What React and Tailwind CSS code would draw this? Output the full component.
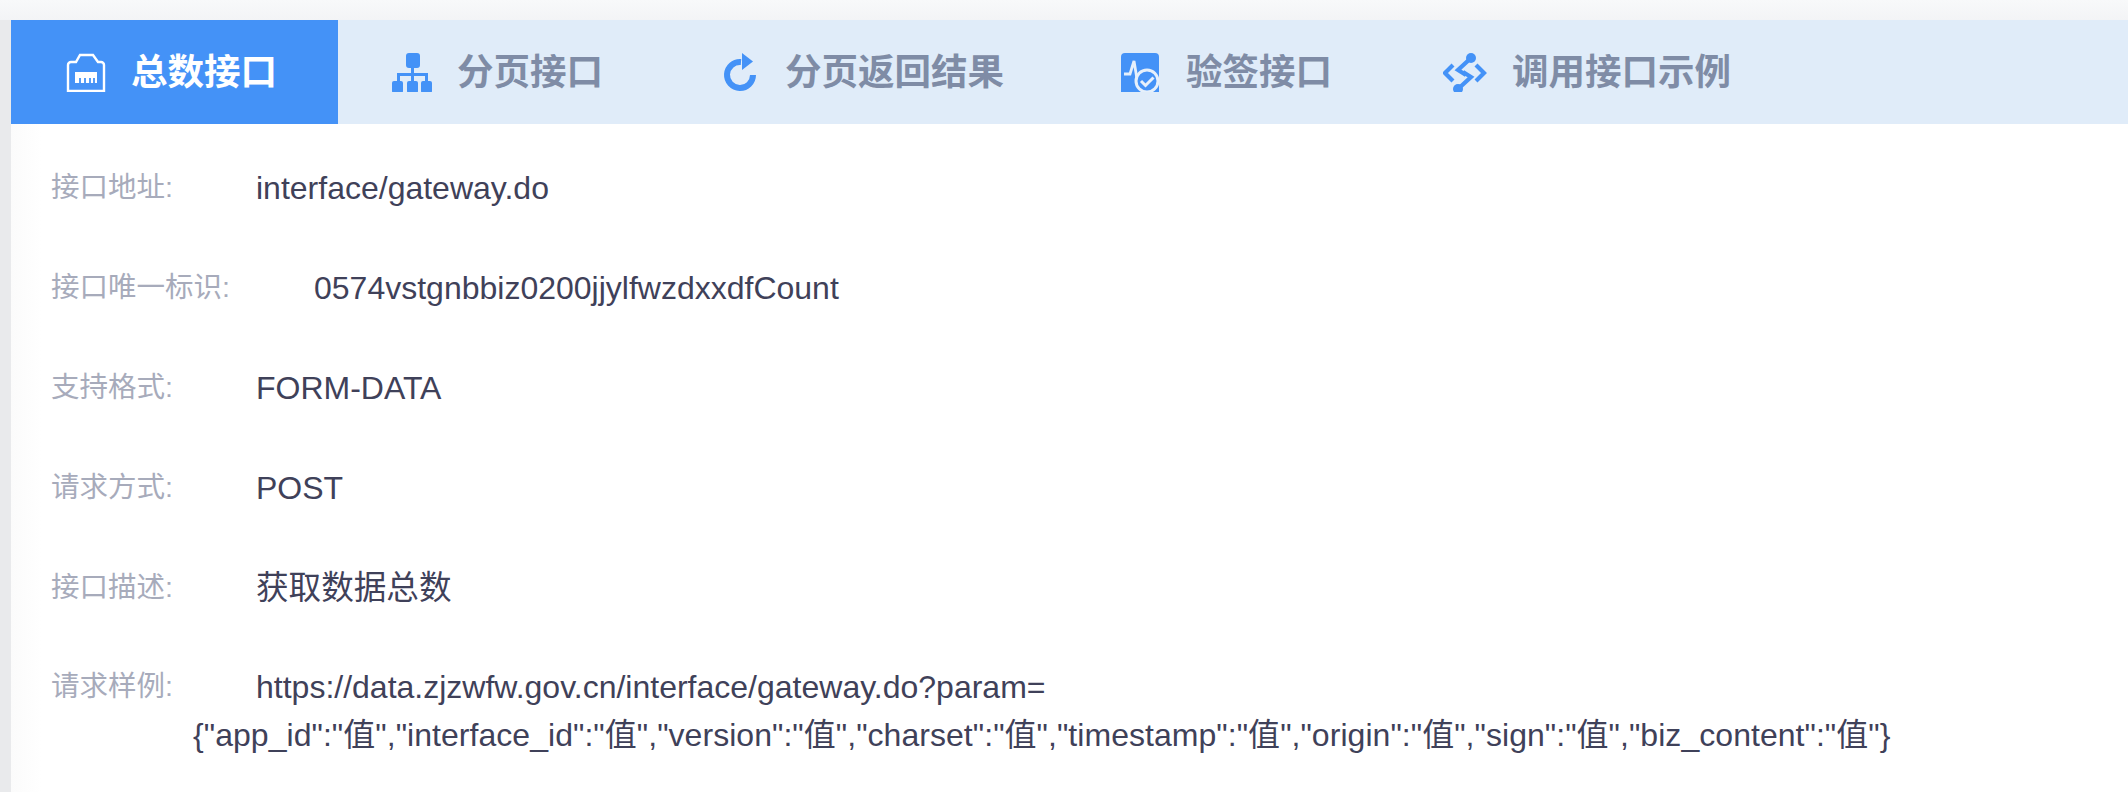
const Rj45Icon = () => (
  <svg viewBox="0 0 40 40" className="w-10 h-10 shrink-0" fill="none" stroke="#fff" strokeWidth="2.4">
    <path d="M2 38V12a3 3 0 0 1 3-3h5l4-7h13l5 7h3a3 3 0 0 1 3 3v26z" />
    <path d="M9 19h22v11H9z" fill="#fff" stroke="none" />
    <path d="M14 25v5M19 25v5M24 25v5M28 25v5" stroke="#4492f7" strokeWidth="1.8" />
  </svg>
);

const TreeIcon = () => (
  <svg viewBox="0 0 40 40" className="w-10 h-10 shrink-0" fill="#4492f7">
    <rect x="14" y="0" width="14" height="15" rx="3" />
    <path d="M19 14h3v6h14v10h-3v-7H22v7h-3v-7H8v7H5V20h14z" />
    <rect x="0" y="28" width="11" height="12" rx="2" />
    <rect x="15" y="28" width="11" height="12" rx="2" />
    <rect x="29" y="28" width="11" height="12" rx="2" />
  </svg>
);

const RefreshIcon = () => (
  <svg viewBox="0 0 38 40" className="w-[38px] h-10 shrink-0" fill="none">
    <path d="M31 22A13 13 0 1 1 19 9" stroke="#4492f7" strokeWidth="6" />
    <path d="M20 0l11 8.5-11 8.5z" fill="#4492f7" />
  </svg>
);

const VerifyIcon = () => (
  <svg viewBox="0 0 40 40" className="w-10 h-10 shrink-0">
    <rect x="0" y="0" width="38" height="42" rx="4" fill="#4492f7" />
    <path d="M3 21h6l4-13 4 24 3-11h4" fill="none" stroke="#e6f0fb" strokeWidth="2.8" />
    <circle cx="26" cy="28" r="11" fill="#4492f7" stroke="#e6f0fb" strokeWidth="3" />
    <path d="M20 28l4.500 4.500 8-8" fill="none" stroke="#e6f0fb" strokeWidth="3" />
  </svg>
);

const LinkIcon = () => (
  <svg viewBox="0 0 44 40" className="w-11 h-10 shrink-0" fill="none" stroke="#4492f7" strokeWidth="4.2">
    <circle cx="28" cy="5" r="5" fill="#4492f7" stroke="none" />
    <circle cx="15" cy="36" r="5" fill="#4492f7" stroke="none" />
    <path d="M28 5L15 17l8 5" />
    <path d="M15 36l13-12-8-5" />
    <path d="M10 12l-8 8 8 8M33 12l8 8-8 8" />
  </svg>
);

const tabs = [
  { label: "总数接口", icon: <Rj45Icon />, active: true, className: "w-[327px] pl-[55px]" },
  { label: "分页接口", icon: <TreeIcon />, className: "w-[329px] pl-[54px]" },
  { label: "分页返回结果", icon: <RefreshIcon />, className: "w-[397px] pl-[55px]" },
  { label: "验签接口", icon: <VerifyIcon />, className: "w-[322px] pl-[57px]" },
  { label: "调用接口示例", icon: <LinkIcon />, className: "pl-[57px]" },
];

const rows = [
  { label: "接口地址:", value: "interface/gateway.do" },
  { label: "接口唯一标识:", value: "0574vstgnbbiz0200jjylfwzdxxdfCount", wide: true },
  { label: "支持格式:", value: "FORM-DATA" },
  { label: "请求方式:", value: "POST" },
  { label: "接口描述:", value: "获取数据总数", cjk: true },
];

const App = () => {
  return (
    <div
      className="w-[2128px] h-[792px] overflow-hidden bg-[#e9eaec]"
      style={{ fontFamily: '"Liberation Sans", "Noto Sans CJK SC", sans-serif' }}
    >
      <div className="h-5 bg-linear-to-b from-[#f8f9fa] to-[#f3f4f6]" />
      <div className="ml-[11px]">
        <div className="flex h-[104px] bg-[#e0ecf9]">
          {tabs.map((tab) => (
            <div
              key={tab.label}
              className={`flex items-start pt-[33px] h-full overflow-hidden ${tab.className} ${tab.active ? "bg-[#4492f7] text-white" : "text-[#7f8ca6]"}`}
            >
              <div className="h-[39px] overflow-hidden">{tab.icon}</div>
              <span className="ml-[25px] text-[36.5px] leading-[40px] font-bold whitespace-nowrap">{tab.label}</span>
            </div>
          ))}
        </div>

        <div className="h-[668px] bg-[linear-gradient(90deg,#fbfbfb,#ffffff_30px)] pl-[40px] text-[32px] text-[#3f4159]">
          {rows.map((row) => (
            <div key={row.label} className="flex h-[100px] items-start pt-[44px]">
              <span className={`text-[28.5px] leading-[38px] text-[#a7abbb] ${row.wide ? "w-[263px]" : "w-[205px]"}`}>
                {row.label}
              </span>
              <span className={`leading-[40px] whitespace-nowrap ${row.cjk ? "text-[32.6px]" : ""}`}>{row.value}</span>
            </div>
          ))}
          <div className="pt-[43px]">
            <div className="flex">
              <span className="w-[205px] text-[28.5px] leading-[38px] text-[#a7abbb]">请求样例:</span>
              <span className="leading-[40px] whitespace-nowrap">https://data.zjzwfw.gov.cn/interface/gateway.do?param=</span>
            </div>
            <div className="pl-[142px] mt-[8px] leading-[40px] tracking-[0.045px] whitespace-nowrap">
              {'{"app_id":"值","interface_id":"值","version":"值","charset":"值","timestamp":"值","origin":"值","sign":"值","biz_content":"值"}'}
            </div>
          </div>
        </div>
      </div>
    </div>
  );
};

export default App;
